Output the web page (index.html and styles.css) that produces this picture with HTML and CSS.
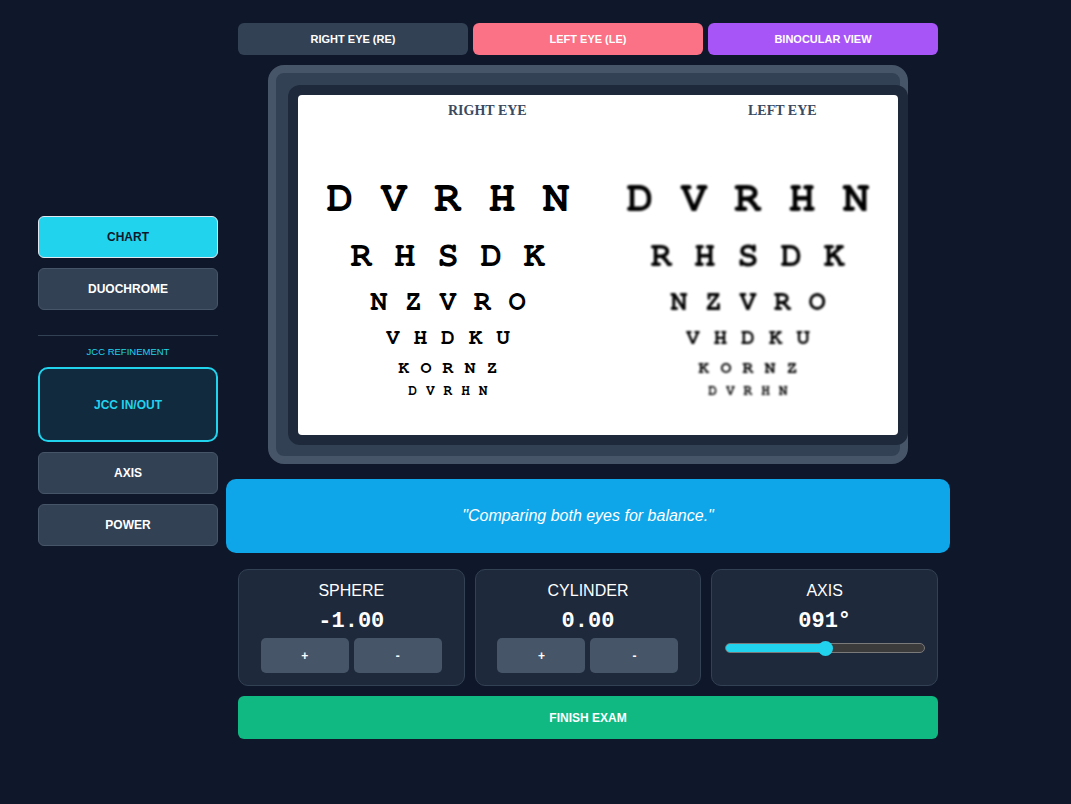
FILE: index.html
```html
<!DOCTYPE html>
<html lang="en">
<head>
  <meta charset="UTF-8">
  <meta name="viewport" content="width=device-width, initial-scale=1.0">
  <title>Refraction Exam</title>
  <link rel="stylesheet" href="styles.css">
</head>
<body>

  <!-- Test mode menu -->
  <aside class="sidebar">
    <button class="side-btn active">CHART</button>
    <button class="side-btn">DUOCHROME</button>
    <hr class="divider">
    <div class="side-label">JCC REFINEMENT</div>
    <button class="side-btn jcc">JCC IN/OUT</button>
    <button class="side-btn">AXIS</button>
    <button class="side-btn">POWER</button>
  </aside>

  <main class="main">
    <!-- Eye selector -->
    <div class="eye-tabs">
      <button class="eye-tab re">RIGHT EYE (RE)</button>
      <button class="eye-tab le">LEFT EYE (LE)</button>
      <button class="eye-tab bino">BINOCULAR VIEW</button>
    </div>

    <!-- Projector screen -->
    <div class="monitor">
      <div class="screen">
        <div class="chart">
          <div class="chart-col">
            <div class="eye-label">RIGHT EYE</div>
            <div class="row r1">D V R H N</div>
            <div class="row r2">R H S D K</div>
            <div class="row r3">N Z V R O</div>
            <div class="row r4">V H D K U</div>
            <div class="row r5">K O R N Z</div>
            <div class="row r6">D V R H N</div>
          </div>
          <div class="chart-col">
            <div class="eye-label">LEFT EYE</div>
            <div class="blurred">
              <div class="row r1">D V R H N</div>
              <div class="row r2">R H S D K</div>
              <div class="row r3">N Z V R O</div>
              <div class="row r4">V H D K U</div>
              <div class="row r5">K O R N Z</div>
              <div class="row r6">D V R H N</div>
            </div>
          </div>
        </div>
      </div>
    </div>

    <div class="prompt">"Comparing both eyes for balance."</div>

    <!-- Lens controls -->
    <div class="controls">
      <div class="card">
        <div class="card-title">SPHERE</div>
        <div class="card-value">-1.00</div>
        <div class="step-btns">
          <button class="step">+</button>
          <button class="step">-</button>
        </div>
      </div>
      <div class="card">
        <div class="card-title">CYLINDER</div>
        <div class="card-value">0.00</div>
        <div class="step-btns">
          <button class="step">+</button>
          <button class="step">-</button>
        </div>
      </div>
      <div class="card">
        <div class="card-title">AXIS</div>
        <div class="card-value">091&deg;</div>
        <input type="range" class="axis-slider" min="0" max="180" value="91" style="background: linear-gradient(to right, #22d3ee 50.5%, #3b3b3b 50.5%);">
      </div>
    </div>

    <button class="finish">FINISH EXAM</button>
  </main>

</body>
</html>
```

FILE: styles.css
```css
body {
  margin: 0;
  padding: 23px 38px;
  background-color: #0f172a;
  font-family: "Liberation Sans", Arial, sans-serif;
  color: #fff;
  display: flex;
  align-items: center;
  gap: 20px;
}

button {
  font-family: "Liberation Sans", Arial, sans-serif;
  cursor: pointer;
}

/* sidebar */
.sidebar {
  width: 180px;
  display: flex;
  flex-direction: column;
  gap: 10px;
}

.side-btn {
  height: 42px;
  background-color: #334155;
  border: 1px solid #475569;
  border-radius: 6px;
  color: #fff;
  font-size: 12px;
  font-weight: bold;
}

.side-btn.active {
  background-color: #22d3ee;
  border-color: #e2e8f0;
  color: #0f172a;
}

.side-btn.jcc {
  height: 75px;
  background-color: #112a3e;
  border: 2px solid #22d3ee;
  border-radius: 10px;
  color: #22d3ee;
}

.divider {
  width: 100%;
  margin: 15px 0 0;
  border: none;
  border-top: 1px solid #334155;
}

.side-label {
  text-align: center;
  font-size: 9.5px;
  line-height: 11px;
  color: #22d3ee;
}

/* main column */
.main {
  width: 700px;
  display: flex;
  flex-direction: column;
  align-items: center;
}

.eye-tabs {
  width: 100%;
  display: flex;
  gap: 5px;
}

.eye-tab {
  flex: 1;
  height: 32px;
  border: none;
  border-radius: 6px;
  color: #fff;
  font-size: 11px;
  font-weight: bold;
}

.eye-tab.re { background-color: #334155; }
.eye-tab.le { background-color: #fb7185; }
.eye-tab.bino { background-color: #a855f7; }

/* screen */
.monitor {
  width: 640px;
  height: 399px;
  box-sizing: border-box;
  margin-top: 10px;
  padding: 12px 0 0 12px;
  background-color: #334155;
  border: 8px solid #475569;
  border-radius: 16px;
}

.screen {
  width: 620px;
  height: 360px;
  box-sizing: border-box;
  padding: 10px;
  background-color: #1e293b;
  border-radius: 12px;
}

.chart {
  height: 340px;
  background-color: #fff;
  border-radius: 4px;
  display: flex;
}

.chart-col {
  flex: 1;
  text-align: center;
}

.eye-label {
  height: 71px;
  box-sizing: border-box;
  padding: 8px 0 0 50%;
  text-align: left;
  font-family: "Liberation Serif", "Times New Roman", serif;
  font-size: 14px;
  font-weight: bold;
  line-height: 16px;
  color: #3b4a61;
}

.row {
  font-family: "Nimbus Mono PS", "Nimbus Mono L", "FreeMono", "Courier", "Courier New", "Liberation Mono", monospace;
  font-weight: bold;
  line-height: 1.425;
  color: #000;
  white-space: pre;
}

.r1 { font-size: 45px; }
.r2 { font-size: 36px; }
.r3 { font-size: 28.8px; }
.r4 { font-size: 23px; }
.r5 { font-size: 18.4px; }
.r6 { font-size: 14.7px; }

.blurred {
  filter: blur(1.3px);
}

/* prompt */
.prompt {
  width: 724px;
  height: 74px;
  margin-top: 15px;
  background-color: #0ea5e9;
  border-radius: 10px;
  display: flex;
  align-items: center;
  justify-content: center;
  font-size: 16px;
  font-style: italic;
}

/* controls */
.controls {
  width: 100%;
  margin-top: 16px;
  display: grid;
  grid-template-columns: repeat(3, 1fr);
  gap: 10px;
}

.card {
  height: 117px;
  box-sizing: border-box;
  padding: 12px 0;
  background-color: #1e293b;
  border: 1px solid #334155;
  border-radius: 10px;
  text-align: center;
}

.card-title {
  font-size: 16px;
  line-height: 18px;
}

.card-value {
  margin: 9px 0 4px;
  font-family: "Liberation Mono", monospace;
  font-size: 22px;
  font-weight: bold;
  line-height: 25px;
}

.step-btns {
  display: flex;
  justify-content: center;
  gap: 5px;
}

.step {
  width: 88px;
  height: 35px;
  background-color: #475569;
  border: none;
  border-radius: 5px;
  color: #fff;
  font-size: 12px;
  font-weight: bold;
}

.axis-slider {
  -webkit-appearance: none;
  appearance: none;
  display: block;
  width: 200px;
  height: 10px;
  margin: 9px auto 0;
  box-sizing: border-box;
  border: 1px solid #7a7a7a;
  border-radius: 5px;
}

.axis-slider::-webkit-slider-thumb {
  -webkit-appearance: none;
  width: 15px;
  height: 15px;
  border-radius: 50%;
  background-color: #22d3ee;
}

.finish {
  width: 100%;
  height: 43px;
  margin-top: 10px;
  background-color: #10b981;
  border: none;
  border-radius: 6px;
  color: #fff;
  font-size: 12px;
  font-weight: bold;
}
```
